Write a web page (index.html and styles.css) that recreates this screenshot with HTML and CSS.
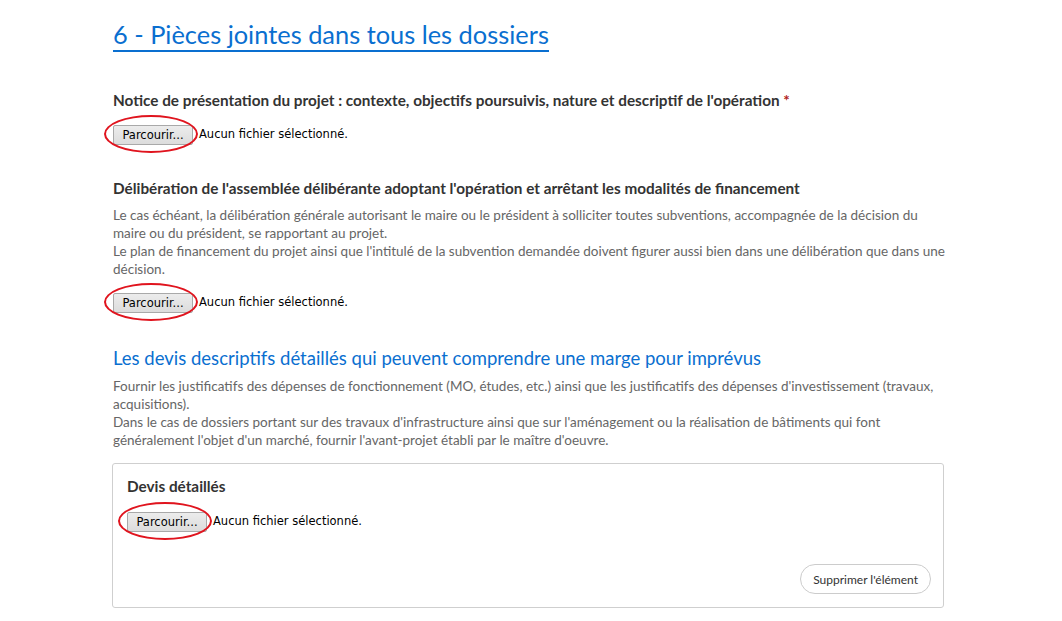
FILE: index.html
```html
<!DOCTYPE html>
<html lang="fr">
<head>
<meta charset="utf-8">
<title>Pièces jointes</title>
<link rel="stylesheet" href="styles.css">
</head>
<body>
<main class="page">
  <h2 class="section-title">6 - Pièces jointes dans tous les dossiers</h2>

  <div class="field field-first">
    <label class="label">Notice de présentation du projet : contexte, objectifs poursuivis, nature et descriptif de l'opération <span class="req">*</span></label>
    <div class="file">
      <span class="btn-wrap"><span class="file-btn">Parcourir...</span><span class="circle"></span></span>
      <span class="file-name">Aucun fichier sélectionné.</span>
    </div>
  </div>

  <div class="field">
    <label class="label">Délibération de l'assemblée délibérante adoptant l'opération et arrêtant les modalités de financement</label>
    <p class="help">Le cas échéant, la délibération générale autorisant le maire ou le président à solliciter toutes subventions, accompagnée de la décision du maire ou du président, se rapportant au projet.<br>Le plan de financement du projet ainsi que l'intitulé de la subvention demandée doivent figurer aussi bien dans une délibération que dans une décision.</p>
    <div class="file">
      <span class="btn-wrap"><span class="file-btn">Parcourir...</span><span class="circle"></span></span>
      <span class="file-name">Aucun fichier sélectionné.</span>
    </div>
  </div>

  <h3 class="sub-title">Les devis descriptifs détaillés qui peuvent comprendre une marge pour imprévus</h3>
  <p class="help">Fournir les justificatifs des dépenses de fonctionnement (MO, études, etc.) ainsi que les justificatifs des dépenses d'investissement (travaux, acquisitions).<br>Dans le cas de dossiers portant sur des travaux d'infrastructure ainsi que sur l'aménagement ou la réalisation de bâtiments qui font généralement l'objet d'un marché, fournir l'avant-projet établi par le maître d'oeuvre.</p>

  <div class="card">
    <label class="label">Devis détaillés</label>
    <div class="file">
      <span class="btn-wrap"><span class="file-btn">Parcourir...</span><span class="circle"></span></span>
      <span class="file-name">Aucun fichier sélectionné.</span>
    </div>
    <div class="card-actions">
      <button class="pill" type="button">Supprimer l'élément</button>
    </div>
  </div>
</main>
</body>
</html>
```
FILE: styles.css
```css
* { box-sizing: border-box; }
html, body { margin: 0; padding: 0; background: #fff; }
body {
  font-family: Lato, "Open Sans", sans-serif;
  color: #333;
}
.page {
  width: 831px;
  margin-left: 113px;
  padding-top: 19px;
}
.section-title {
  display: inline-block;
  margin: 0;
  font-weight: 400;
  font-size: 25.4px;
  line-height: 31px;
  color: #0a6fd0;
  border-bottom: 2px solid #0a6fd0;
  padding-bottom: 0;
}
.field-first { margin-top: 38px; }
.field { margin-bottom: 34px; }
.label {
  display: block;
  font-weight: 700;
  font-size: 15.3px;
  line-height: 20px;
  color: #333;
}
.req { color: #b02020; }
.help {
  margin: 8px -6px 0 0;
  font-size: 13.5px;
  line-height: 18px;
  color: #666;
}
.file {
  display: flex;
  align-items: center;
  margin-top: 14px;
  height: 20px;
}
.field .help + .file { margin-top: 14px; }
.btn-wrap { position: relative; display: inline-block; }
.file-btn {
  display: inline-block;
  width: 80px;
  height: 20px;
  line-height: 18px;
  text-align: center;
  font-family: "DejaVu Sans", Verdana, sans-serif;
  font-size: 11.5px;
  color: #000;
  background: linear-gradient(#ececec, #dcdcdc);
  border: 1px solid #a9a9a9;
  border-radius: 2px;
}
.circle {
  position: absolute;
  left: -9px;
  top: -8px;
  width: 94px;
  height: 38px;
  border: 2.5px solid #e0141e;
  border-radius: 50%;
}
.file-name {
  margin-left: 6px;
  font-family: "DejaVu Sans", Verdana, sans-serif;
  font-size: 11.5px;
  color: #000;
}
.sub-title {
  margin: 0;
  font-weight: 400;
  font-size: 18.5px;
  line-height: 24px;
  color: #0a6fd0;
}
.sub-title + .help { margin-top: 7px; }
.card {
  margin-top: 14px;
  margin-left: -1px;
  border: 1px solid #cfcfcf;
  border-radius: 3px;
  padding: 12px 12px 13px 14px;
}
.card .file { margin-top: 15px; }
.card-actions {
  display: flex;
  justify-content: flex-end;
  margin-top: 33px;
}
.pill {
  height: 30px;
  padding: 0 12px;
  border: 1px solid #ccc;
  border-radius: 15px;
  background: #fff;
  font-family: Lato, "Open Sans", sans-serif;
  font-size: 12px;
  color: #333;
}
```
